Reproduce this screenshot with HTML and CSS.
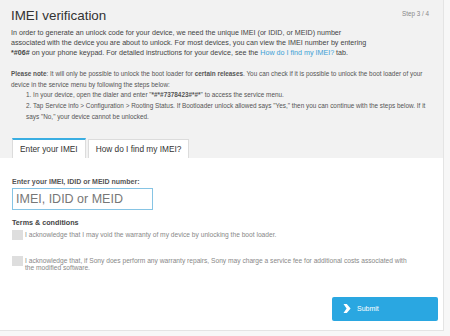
FILE: index.html
```html
<!DOCTYPE html>
<html lang="en">

<head>
    <meta charset="utf-8">
    <meta name="viewport" content="width=device-width, initial-scale=1.0">
    <title>IMEI verification</title>

    <link rel="stylesheet" href="styles.css">
</head>

<body>
    <div class="panel">
        <div class="intro">
            <div class="title-row">
                <h1>IMEI verification</h1>
                <span class="step">Step 3 / 4</span>
            </div>

            <p class="lead">In order to generate an unlock code for your device, we need the unique IMEI (or IDID, or MEID) number<br>associated with the device you are about to unlock. For most devices, you can view the IMEI number by entering<br><b>*#06#</b> on your phone keypad. For detailed instructions for your device, see the <a href="#">How do I find my IMEI?</a> tab.</p>

            <div class="note">
                <p><b>Please note</b>: It will only be possible to unlock the boot loader for <b>certain releases</b>. You can check if it is possible to unlock the boot loader of your device in the service menu by following the steps below:</p>
                <ol>
                    <li>In your device, open the dialer and enter "<b>*#*#7378423#*#*</b>" to access the service menu.</li>
                    <li>Tap Service info &gt; Configuration &gt; Rooting Status. If Bootloader unlock allowed says "Yes," then you can continue with the steps below. If it says "No," your device cannot be unlocked.</li>
                </ol>
            </div>

            <div class="tabs">
                <div class="tab active">Enter your IMEI</div>
                <div class="tab">How do I find my IMEI?</div>
            </div>
        </div>

        <form class="imei-form">
            <label class="field-label" for="imei">Enter your IMEI, IDID or MEID number:</label>
            <input type="text" id="imei" class="imei-input" placeholder="IMEI, IDID or MEID">

            <h2>Terms &amp; conditions</h2>
            <label class="check">
                <span class="box"></span>
                <span class="check-text">I acknowledge that I may void the warranty of my device by unlocking the boot loader.</span>
            </label>
            <label class="check second">
                <span class="box"></span>
                <span class="check-text">I acknowledge that, if Sony does perform any warranty repairs, Sony may charge a service fee for additional costs associated with the modified software.</span>
            </label>

            <div class="actions">
                <button type="button" class="submit-btn">
                    <svg width="8" height="9" viewBox="0 0 8 9"><path d="M0.5 0 L3.8 0 L7.6 4.5 L3.8 9 L0.5 9 L3.6 4.5 Z" fill="#fff"/></svg>
                    Submit
                </button>
            </div>
        </form>
    </div>
</body>

</html>
```

FILE: styles.css
```css
html {
    font-family: 'Liberation Sans', Arial, sans-serif;
}

body {
    margin: 0px;
    background-color: #f7f7f7;
}

.panel {
    width: 444px;
    height: 331px;
    box-sizing: border-box;
    background-color: #fff;
    border-right: 1px solid #e4e4e4;
    border-bottom: 1px solid #e4e4e4;
}

.intro {
    background-color: #f2f2f2;
    padding: 8px 12px 0px 11px;
}

.title-row {
    display: flex;
    justify-content: space-between;
    align-items: flex-start;
}

h1 {
    margin: 0px;
    font-size: 13.4px;
    font-weight: normal;
    line-height: 16px;
    color: #333;
}

.step {
    font-size: 6.3px;
    line-height: 8px;
    margin: 2px 2px 0px 0px;
    color: #888;
}

.lead {
    margin: 4px 0px 0px;
    font-size: 7.15px;
    line-height: 10px;
    white-space: nowrap;
    color: #444;
}

.lead a {
    color: #3a9fd6;
    text-decoration: none;
}

.note {
    margin-top: 11px;
    font-size: 6.4px;
    line-height: 10.7px;
    color: #555;
}

.note p {
    margin: 0px;
}

.note ol {
    margin: 0px;
    padding-left: 15px;
    list-style-position: inside;
}

.tabs {
    display: flex;
    align-items: flex-end;
    gap: 2px;
    margin-top: 15px;
    padding-left: 1px;
}

.tab {
    height: 19px;
    box-sizing: border-box;
    padding: 0px 7px;
    background-color: #fff;
    border: 1px solid #dcdcdc;
    border-bottom: none;
    font-size: 8.3px;
    line-height: 18px;
    color: #333;
}

.tab.active {
    height: 20px;
    border-top: 2px solid #3aaee2;
}

.imei-form {
    display: flex;
    flex-direction: column;
    align-items: flex-start;
    padding: 20px 5px 0px 12px;
}

.field-label {
    font-size: 7px;
    font-weight: bold;
    line-height: 8px;
    color: #555;
}

.imei-input {
    width: 141px;
    height: 22px;
    box-sizing: border-box;
    margin: 2px 0px 0px;
    padding: 0px 3px;
    border: 1px solid #86c4e4;
    outline: none;
    font-family: inherit;
    font-size: 12.5px;
    color: #333;
}

.imei-input::placeholder {
    color: #777;
}

h2 {
    margin: 9px 0px 3px;
    font-size: 7.2px;
    line-height: 8px;
    color: #444;
}

.check {
    display: flex;
    gap: 2px;
    font-size: 6.65px;
    line-height: 7px;
    color: #888;
}

.check.second {
    margin-top: 16px;
}

.box {
    flex: none;
    width: 11px;
    height: 10px;
    background-color: #dedede;
}

.check-text {
    width: 386px;
    padding-top: 1px;
}

.actions {
    align-self: stretch;
    display: flex;
    justify-content: flex-end;
    margin-top: 26px;
}

.submit-btn {
    display: flex;
    align-items: center;
    gap: 6px;
    width: 106px;
    height: 24px;
    padding: 0px 0px 0px 11px;
    border: none;
    border-radius: 2px;
    background-color: #2aa7e1;
    color: #fff;
    font-family: inherit;
    font-size: 7px;
}
```
